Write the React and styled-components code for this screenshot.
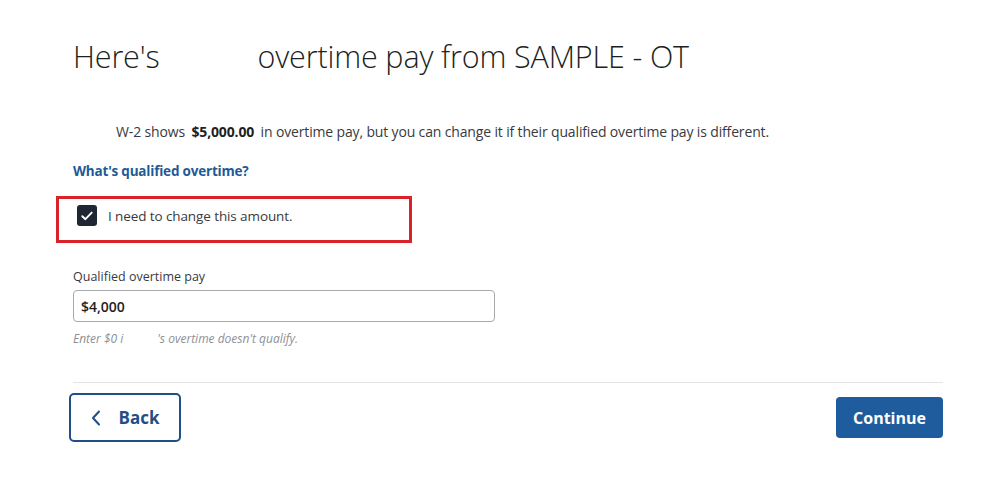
import styled, { createGlobalStyle } from "styled-components";

const GlobalStyle = createGlobalStyle`
  body {
    margin: 0;
    background: #ffffff;
    font-family: "Open Sans", "Noto Sans", sans-serif;
    color: #393a3d;
  }
`;

const App = () => {
  return (
    <>
      <GlobalStyle />
      <Page>
        <Title>
          Here's<Redacted $w={98} />overtime pay from SAMPLE - OT
        </Title>

        <Intro>
          W-2 shows <Amount>$5,000.00</Amount> in overtime pay, but you can
          change it if their qualified overtime pay is different.
        </Intro>

        <HelpLink href="#">What's qualified overtime?</HelpLink>

        <Highlight>
          <CheckRow>
            <CheckBox>
              <svg width="12" height="10" viewBox="0 0 12 10" fill="none">
                <path
                  d="M1.3 5.2L4.4 8.2L10.7 1.6"
                  stroke="#ffffff"
                  strokeWidth="1.9"
                  strokeLinecap="round"
                  strokeLinejoin="round"
                />
              </svg>
            </CheckBox>
            <CheckLabel>I need to change this amount.</CheckLabel>
          </CheckRow>
        </Highlight>

        <Field>
          <FieldLabel>Qualified overtime pay</FieldLabel>
          <Input defaultValue="$4,000" />
          <Hint>
            Enter $0 i<Redacted $w={34} />'s overtime doesn't qualify.
          </Hint>
        </Field>

        <Divider />

        <Footer>
          <BackButton>
            <svg width="10" height="16" viewBox="0 0 10 16" fill="none">
              <path
                d="M8 1.5L2 8L8 14.5"
                stroke="#1f4f86"
                strokeWidth="2"
                strokeLinecap="round"
                strokeLinejoin="round"
              />
            </svg>
            Back
          </BackButton>
          <ContinueButton>Continue</ContinueButton>
        </Footer>
      </Page>
    </>
  );
};

export default App;

const Page = styled.div`
  width: 870px;
  padding: 36px 0 0 73px;
  display: flex;
  flex-direction: column;
`;

const Title = styled.h1`
  margin: 0;
  font-family: "Open Sans", sans-serif;
  font-weight: 300;
  font-size: 30.5px;
  line-height: 40px;
  color: #1d1f22;
  letter-spacing: -0.15px;
  display: flex;
  white-space: pre;
`;

const Redacted = styled.span`
  display: inline-block;
  width: ${(p) => p.$w}px;
`;

const Intro = styled.p`
  margin: 46px 0 0 43px;
  font-size: 14px;
  line-height: 20px;
  color: #393a3d;
  letter-spacing: -0.15px;
`;

const Amount = styled.strong`
  font-weight: 700;
  color: #1d1f22;
  margin: 0 3px;
`;

const HelpLink = styled.a`
  margin-top: 19px;
  font-size: 13.5px;
  line-height: 20px;
  font-weight: 700;
  color: #1f5a96;
  text-decoration: none;
  align-self: flex-start;
  letter-spacing: -0.2px;
`;

const Highlight = styled.div`
  margin: 15px 0 0 -17px;
  width: 356px;
  height: 47px;
  flex-shrink: 0;
  box-sizing: border-box;
  border: 3px solid #d9232b;
  display: flex;
  align-items: center;
  padding-left: 18px;
`;

const CheckRow = styled.label`
  display: flex;
  align-items: center;
  gap: 11px;
  margin-top: -8px;
`;

const CheckBox = styled.span`
  width: 20px;
  height: 21px;
  border-radius: 3px;
  background: #1e2733;
  display: flex;
  align-items: center;
  justify-content: center;
`;

const CheckLabel = styled.span`
  font-size: 13.5px;
  color: #393a3d;
  letter-spacing: -0.1px;
`;

const Field = styled.div`
  margin-top: 26px;
  display: flex;
  flex-direction: column;
`;

const FieldLabel = styled.label`
  font-size: 12.5px;
  line-height: 16px;
  color: #393a3d;
`;

const Input = styled.input`
  margin-top: 5px;
  width: 422px;
  height: 32px;
  box-sizing: border-box;
  border: 1px solid #a9aaad;
  border-radius: 4px;
  padding: 0 7px;
  font-family: "Open Sans", sans-serif;
  font-size: 14px;
  font-weight: 600;
  color: #1d1f22;
  outline: none;
`;

const Hint = styled.div`
  margin-top: 8px;
  font-size: 12px;
  font-style: italic;
  color: #8d9096;
  display: flex;
  white-space: pre;
`;

const Divider = styled.hr`
  margin: 35px 0 0 0;
  width: 870px;
  border: none;
  border-top: 1px solid #e3e4e6;
`;

const Footer = styled.div`
  margin-top: 10px;
  margin-left: -4px;
  width: 874px;
  display: flex;
  justify-content: space-between;
  align-items: center;
`;

const BackButton = styled.button`
  width: 112px;
  height: 49px;
  box-sizing: border-box;
  border: 2px solid #1f4f86;
  border-radius: 5px;
  background: #ffffff;
  display: flex;
  align-items: center;
  justify-content: center;
  gap: 18px;
  font-family: "Open Sans", sans-serif;
  font-size: 17px;
  font-weight: 700;
  color: #1f4f86;
  cursor: pointer;
`;

const ContinueButton = styled.button`
  width: 107px;
  height: 41px;
  border: none;
  border-radius: 4px;
  background: #1f5c9e;
  color: #ffffff;
  font-family: "Open Sans", sans-serif;
  font-size: 16px;
  font-weight: 700;
  cursor: pointer;
`;
